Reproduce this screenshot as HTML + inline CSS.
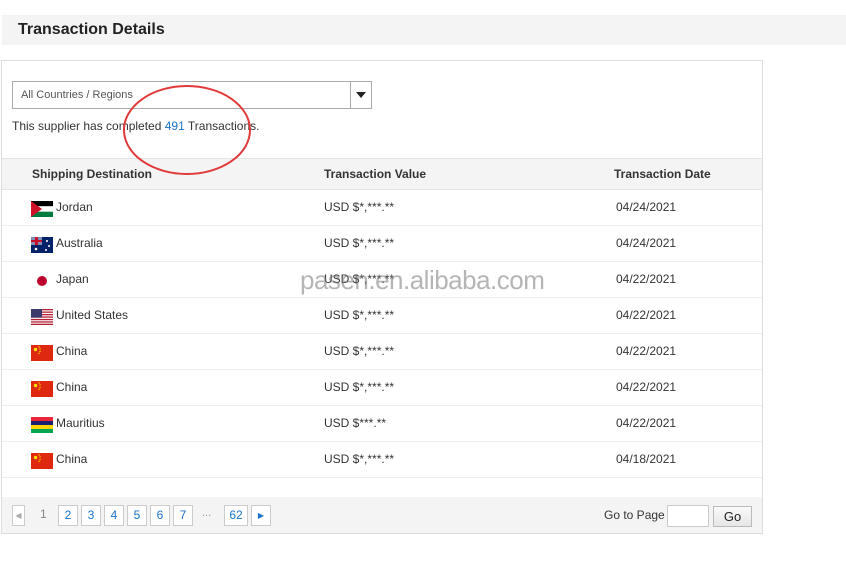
<!DOCTYPE html>
<html><head><meta charset="utf-8"><style>
*{margin:0;padding:0;box-sizing:border-box}
body{width:846px;height:563px;background:#fff;font-family:"Liberation Sans",Arial,sans-serif;color:#333;position:relative;overflow:hidden}
.abs{position:absolute}
svg{display:block}
.hdr{left:2px;top:15px;width:844px;height:30px;background:#f4f4f4;font-weight:bold;font-size:16px;line-height:30px;padding-left:16px;color:#222}
.panel{left:1px;top:60px;width:762px;height:474px;border:1px solid #ddd}
.sel{left:12px;top:81px;width:360px;height:28px;border:1px solid #aaa;font-size:11px;color:#555;line-height:26px;padding-left:8px}
.sel .btn{position:absolute;right:0;top:0;width:21px;height:26px;border-left:1px solid #aaa}
.sel .btn:after{content:"";position:absolute;left:5px;top:10px;border:5px solid transparent;border-top:6px solid #222;border-bottom:0}
.th{left:2px;top:158px;width:760px;height:32px;background:#f4f4f4;border-top:1px solid #e4e4e4;border-bottom:1px solid #e4e4e4;font-size:12px;font-weight:bold;color:#333;line-height:30px}
.row{left:2px;width:760px;height:36px;border-bottom:1px solid #eee;font-size:12px;line-height:34px;color:#333}
.c1{position:absolute;left:54px}.c2{position:absolute;left:322px}.c3{position:absolute;left:614px}
.flag{position:absolute;left:29px;top:11px;width:22px;height:16px;overflow:hidden}
.pg{left:2px;top:497px;width:760px;height:36px;background:#f4f4f4}
.pb{position:absolute;top:8px;height:21px;border:1px solid #ccc;background:#fff;font-size:12px;color:#1a73c8;text-align:center;line-height:19px}
</style></head><body>
<div class="abs hdr">Transaction Details</div>
<div class="abs panel"></div>
<div class="abs sel">All Countries / Regions<div class="btn"></div></div>
<div class="abs" style="left:12px;top:119px;font-size:12px;color:#333">This supplier has completed <span style="color:#1a73c8">491</span> Transactions.</div>
<div class="abs th"><span style="position:absolute;left:30px">Shipping Destination</span><span style="position:absolute;left:322px">Transaction Value</span><span style="position:absolute;left:612px">Transaction Date</span></div>

<div class="abs row" style="top:190px"><div class="flag"><svg width="22" height="16"><rect width="22" height="5.3" fill="#000"/><rect y="5.3" width="22" height="5.4" fill="#fff"/><rect y="10.7" width="22" height="5.3" fill="#007a3d"/><polygon points="0,0 11,8 0,16" fill="#ce1126"/></svg></div><span class="c1">Jordan</span><span class="c2">USD $*,***.**</span><span class="c3">04/24/2021</span></div>
<div class="abs row" style="top:226px"><div class="flag"><svg width="22" height="16"><rect width="22" height="16" fill="#012169"/><rect width="11" height="8" fill="#fff" opacity=".5"/><rect x="4" width="3" height="8" fill="#c8102e"/><rect y="3" width="11" height="2" fill="#c8102e"/><circle cx="5" cy="12" r="1.3" fill="#fff"/><circle cx="16" cy="4" r="1" fill="#fff"/><circle cx="18" cy="9" r="1" fill="#fff"/><circle cx="15" cy="13" r="1" fill="#fff"/></svg></div><span class="c1">Australia</span><span class="c2">USD $*,***.**</span><span class="c3">04/24/2021</span></div>
<div class="abs row" style="top:262px"><div class="flag"><svg width="22" height="16"><circle cx="11" cy="8" r="5" fill="#bc002d"/></svg></div><span class="c1">Japan</span><span class="c2">USD $*,***.**</span><span class="c3">04/22/2021</span></div>
<div class="abs row" style="top:298px"><div class="flag"><svg width="22" height="16"><rect width="22" height="16" fill="#fff"/><g fill="#b22234"><rect y="0" width="22" height="1.3"/><rect y="2.5" width="22" height="1.3"/><rect y="5" width="22" height="1.3"/><rect y="7.4" width="22" height="1.3"/><rect y="9.9" width="22" height="1.3"/><rect y="12.3" width="22" height="1.3"/><rect y="14.7" width="22" height="1.3"/></g><rect width="11" height="8.6" fill="#3c3b6e"/></svg></div><span class="c1">United States</span><span class="c2">USD $*,***.**</span><span class="c3">04/22/2021</span></div>
<div class="abs row" style="top:334px"><div class="flag"><svg width="22" height="16"><rect width="22" height="16" fill="#de2910"/><circle cx="4.5" cy="4.5" r="1.8" fill="#ffde00"/><circle cx="8" cy="2" r=".7" fill="#ffde00"/><circle cx="9" cy="4" r=".7" fill="#ffde00"/><circle cx="9" cy="6.5" r=".7" fill="#ffde00"/><circle cx="8" cy="8.3" r=".7" fill="#ffde00"/></svg></div><span class="c1">China</span><span class="c2">USD $*,***.**</span><span class="c3">04/22/2021</span></div>
<div class="abs row" style="top:370px"><div class="flag"><svg width="22" height="16"><rect width="22" height="16" fill="#de2910"/><circle cx="4.5" cy="4.5" r="1.8" fill="#ffde00"/><circle cx="8" cy="2" r=".7" fill="#ffde00"/><circle cx="9" cy="4" r=".7" fill="#ffde00"/><circle cx="9" cy="6.5" r=".7" fill="#ffde00"/><circle cx="8" cy="8.3" r=".7" fill="#ffde00"/></svg></div><span class="c1">China</span><span class="c2">USD $*,***.**</span><span class="c3">04/22/2021</span></div>
<div class="abs row" style="top:406px"><div class="flag"><svg width="22" height="16"><rect width="22" height="4" fill="#ea2839"/><rect y="4" width="22" height="4" fill="#1a206d"/><rect y="8" width="22" height="4" fill="#ffd500"/><rect y="12" width="22" height="4" fill="#00a551"/></svg></div><span class="c1">Mauritius</span><span class="c2">USD $***.**</span><span class="c3">04/22/2021</span></div>
<div class="abs row" style="top:442px"><div class="flag"><svg width="22" height="16"><rect width="22" height="16" fill="#de2910"/><circle cx="4.5" cy="4.5" r="1.8" fill="#ffde00"/><circle cx="8" cy="2" r=".7" fill="#ffde00"/><circle cx="9" cy="4" r=".7" fill="#ffde00"/><circle cx="9" cy="6.5" r=".7" fill="#ffde00"/><circle cx="8" cy="8.3" r=".7" fill="#ffde00"/></svg></div><span class="c1">China</span><span class="c2">USD $*,***.**</span><span class="c3">04/18/2021</span></div>

<div class="abs pg">
<div class="pb" style="left:10px;width:13px;color:#aaa;font-size:8px">&#9664;</div>
<div style="position:absolute;left:38px;top:10px;font-size:12px;color:#888">1</div>
<div class="pb" style="left:56px;width:20px">2</div>
<div class="pb" style="left:79px;width:20px">3</div>
<div class="pb" style="left:102px;width:20px">4</div>
<div class="pb" style="left:125px;width:20px">5</div>
<div class="pb" style="left:148px;width:20px">6</div>
<div class="pb" style="left:171px;width:20px">7</div>
<div style="position:absolute;left:200px;top:10px;font-size:11px;color:#999">...</div>
<div class="pb" style="left:222px;width:24px">62</div>
<div class="pb" style="left:249px;width:20px;font-size:8px">&#9654;</div>
<div style="position:absolute;left:602px;top:11px;font-size:12px;color:#333">Go to Page</div>
<div style="position:absolute;left:665px;top:8px;width:42px;height:22px;border:1px solid #ccc;background:#fff"></div>
<div style="position:absolute;left:711px;top:9px;width:39px;height:21px;border:1px solid #bbb;background:linear-gradient(#fafafa,#e6e6e6);font-size:13px;text-align:center;line-height:19px;color:#222">Go</div>
</div>

<div class="abs" style="left:300px;top:265px;font-size:26px;color:rgba(120,120,120,.55);letter-spacing:-0.5px">pasen.en.alibaba.com</div>
<svg class="abs" style="left:0;top:0" width="846" height="563"><ellipse cx="187" cy="130" rx="63" ry="44" fill="none" stroke="#e03a3a" stroke-width="2"/></svg>
</body></html>
